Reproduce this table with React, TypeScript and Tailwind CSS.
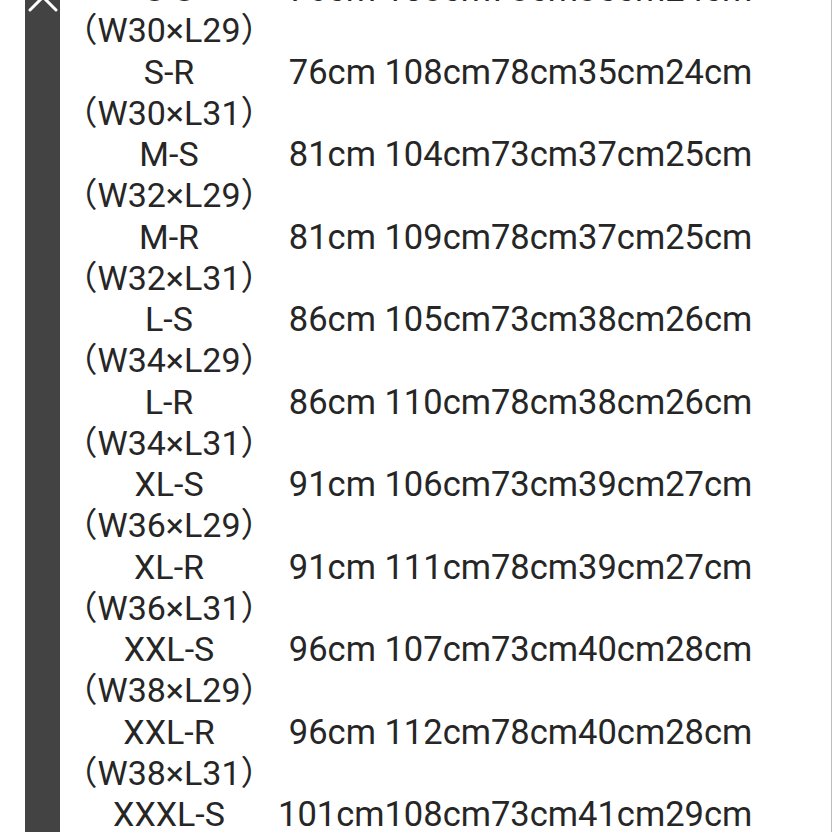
import React from "react";

interface SizeRow {
  size: string;
  fit: string;
  values: string;
}

const rows: SizeRow[] = [
  { size: "S-S", fit: "（W30×L29）", values: "76cm 103cm73cm35cm24cm" },
  { size: "S-R", fit: "（W30×L31）", values: "76cm 108cm78cm35cm24cm" },
  { size: "M-S", fit: "（W32×L29）", values: "81cm 104cm73cm37cm25cm" },
  { size: "M-R", fit: "（W32×L31）", values: "81cm 109cm78cm37cm25cm" },
  { size: "L-S", fit: "（W34×L29）", values: "86cm 105cm73cm38cm26cm" },
  { size: "L-R", fit: "（W34×L31）", values: "86cm 110cm78cm38cm26cm" },
  { size: "XL-S", fit: "（W36×L29）", values: "91cm 106cm73cm39cm27cm" },
  { size: "XL-R", fit: "（W36×L31）", values: "91cm 111cm78cm39cm27cm" },
  { size: "XXL-S", fit: "（W38×L29）", values: "96cm 107cm73cm40cm28cm" },
  { size: "XXL-R", fit: "（W38×L31）", values: "96cm 112cm78cm40cm28cm" },
  { size: "XXXL-S", fit: "（W40×L29）", values: "101cm108cm73cm41cm29cm" },
];

export default function App() {
  return (
    <div className="flex h-[832px] w-[832px] overflow-hidden bg-white">
      <div className="w-[25px] shrink-0 bg-white" />
      <div className="relative w-[35px] shrink-0 bg-[#434343]">
        <svg
          className="absolute left-[3px] top-[-18px]"
          width="30"
          height="30"
          viewBox="0 0 30 30"
          fill="none"
          stroke="#ffffff"
          strokeWidth="3"
          strokeLinecap="round"
        >
          <path d="M2 2 L28 28 M28 2 L2 28" />
        </svg>
      </div>
      <div
        className="flex-1 border-r border-[#bdbdbd] text-[34px] leading-[41.25px] text-[#262626]"
        style={{ fontFamily: "Roboto, 'Noto Sans CJK SC', sans-serif" }}
      >
        <div className="mt-[-31px] flex flex-col">
          {rows.map((r) => (
            <div key={r.size} className="flex items-start">
              <div className="flex w-[218px] shrink-0 flex-col items-center whitespace-nowrap">
                <span>{r.size}</span>
                <span>{r.fit}</span>
              </div>
              <div className="flex-1 whitespace-nowrap pr-[79px] text-right text-[34.5px]">
                {r.values}
              </div>
            </div>
          ))}
        </div>
      </div>
    </div>
  );
}
